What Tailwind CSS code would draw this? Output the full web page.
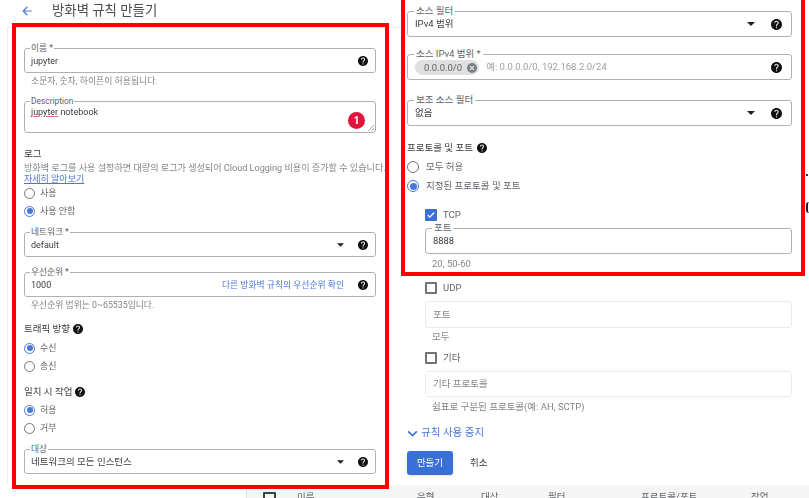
<!DOCTYPE html>
<html lang="ko"><head><meta charset="utf-8">
<script src="https://cdn.jsdelivr.net/npm/@tailwindcss/browser@4"></script>
</head>
<body class="bg-white">
<svg class="hidden"><defs>
<symbol id="help" viewBox="2 2 20 20"><path fill="#111" d="M12 2C6.48 2 2 6.48 2 12s4.48 10 10 10 10-4.48 10-10S17.52 2 12 2zm1 17h-2v-2h2v2zm2.07-7.75l-.9.92C13.45 12.9 13 13.5 13 15h-2v-.5c0-1.1.45-2.1 1.17-2.83l1.24-1.26c.37-.36.59-.86.59-1.41 0-1.1-.9-2-2-2s-2 .9-2 2H8c0-2.21 1.79-4 4-4s4 1.79 4 4c0 .88-.36 1.68-.93 2.25z"/></symbol>
<symbol id="caret" viewBox="0 0 8 4"><path fill="#202124" d="M0 0h8L4 4z"/></symbol>
</defs></svg>
<div class="relative w-[809px] h-[498px] overflow-hidden flex blur-[0.4px] text-[9.5px] leading-[12px] text-[#3c4043] font-['Roboto','Noto_Sans_CJK_KR',sans-serif]">

<!-- left column -->
<div class="w-[400px] shrink-0 flex flex-col">
  <div class="ml-[7px] h-[28px] border-b border-[#e8eaed] flex items-start pt-[1px]">
    <svg class="ml-[13px] mt-[3px] w-[14px] h-[14px]" viewBox="0 0 24 24"><path fill="#4a78d8" d="M20 11H7.83l5.59-5.59L12 4l-8 8 8 8 1.41-1.41L7.83 13H20v-2z"/></svg>
    <span class="ml-[18px] text-[13.4px] leading-[19px] text-[#4a4d51]">방화벽 규칙 만들기</span>
  </div>
  <div class="ml-[24px] w-[352px] flex flex-col">
    <div class="relative mt-[20px] h-[25px] border border-[#aeb1b5] rounded-[3px] flex items-center justify-between pl-[6px] pr-[7px]">
      <span class="absolute left-[5px] top-[-7px] bg-white px-[1px] text-[8.7px] text-[#5f6368]">이름 *</span>
      <span class="text-[9px]">jupyter</span>
      <svg class="w-[10px] h-[10px]"><use href="#help"/></svg>
    </div>
    <p class="mt-[2px] pl-[7px] text-[8.9px] text-[#80868b]">소문자, 숫자, 하이픈이 허용됩니다.</p>
    <div class="relative mt-[14px] h-[32px] border border-[#aeb1b5] rounded-[3px] pl-[6px] pt-[4px]">
      <span class="absolute left-[5px] top-[-7px] bg-white px-[1px] text-[8.4px] text-[#5f6368]">Description</span>
      <span class="text-[9px]"><span class="underline decoration-[#e8688a] underline-offset-1">jupyter</span> notebook</span>
      <span class="absolute left-[323px] top-[10px] w-[17px] h-[17px] rounded-full bg-[#e0143c] text-white text-[10px] font-bold leading-[17px] text-center">1</span>
      <svg class="absolute right-[1px] bottom-[1px] w-[6px] h-[6px]" viewBox="0 0 6 6"><path stroke="#80868b" stroke-width=".7" d="M6 0L0 6M6 3L3 6"/></svg>
    </div>
    <p class="mt-[15px] text-[#3c4043]">로그</p>
    <p class="mt-[2px] text-[9.1px] text-[#80868b] whitespace-nowrap">방화벽 로그를 사용 설정하면 대량의 로그가 생성되어 Cloud Logging 비용이 증가할 수 있습니다.</p>
    <a class="text-[9px] leading-[10px] text-[#4a78d8] underline">자세히 알아보기</a>
    <div class="h-[18px] flex items-center gap-[5px]"><span class="w-[11px] h-[11px] rounded-full border border-[#70757a]"></span><span class="text-[9px] text-[#5f6368]">사용</span></div>
    <div class="h-[18px] flex items-center gap-[5px]"><span class="w-[11px] h-[11px] rounded-full border border-[#4a78d8] flex items-center justify-center"><span class="w-[6px] h-[6px] rounded-full bg-[#4a78d8]"></span></span><span class="text-[9px] text-[#5f6368]">사용 안함</span></div>
    <div class="relative mt-[12px] h-[25px] border border-[#aeb1b5] rounded-[3px] flex items-center pl-[6px] pr-[7px]">
      <span class="absolute left-[5px] top-[-7px] bg-white px-[1px] text-[8.7px] text-[#5f6368]">네트워크 *</span>
      <span class="flex-1 text-[9px]">default</span>
      <svg class="w-[7px] h-[4px] mr-[14px]"><use href="#caret"/></svg>
      <svg class="w-[10px] h-[10px]"><use href="#help"/></svg>
    </div>
    <div class="relative mt-[15px] h-[25px] border border-[#aeb1b5] rounded-[3px] flex items-center pl-[6px] pr-[7px]">
      <span class="absolute left-[5px] top-[-7px] bg-white px-[1px] text-[8.7px] text-[#5f6368]">우선순위 *</span>
      <span class="flex-1 text-[9px]">1000</span>
      <a class="text-[8.8px] text-[#4a78d8] mr-[14px]">다른 방화벽 규칙의 우선순위 확인</a>
      <svg class="w-[10px] h-[10px]"><use href="#help"/></svg>
    </div>
    <p class="mt-[2px] pl-[7px] text-[8.8px] text-[#80868b]">우선순위 범위는 0~65535입니다.</p>
    <p class="mt-[12px] flex items-center gap-[3px]">트래픽 방향 <svg class="w-[10px] h-[10px]"><use href="#help"/></svg></p>
    <div class="mt-[4px] h-[18px] flex items-center gap-[5px]"><span class="w-[11px] h-[11px] rounded-full border border-[#4a78d8] flex items-center justify-center"><span class="w-[6px] h-[6px] rounded-full bg-[#4a78d8]"></span></span><span class="text-[9px] text-[#5f6368]">수신</span></div>
    <div class="h-[18px] flex items-center gap-[5px]"><span class="w-[11px] h-[11px] rounded-full border border-[#70757a]"></span><span class="text-[9px] text-[#5f6368]">송신</span></div>
    <p class="mt-[11px] flex items-center gap-[3px]">일치 시 작업 <svg class="w-[10px] h-[10px]"><use href="#help"/></svg></p>
    <div class="mt-[3px] h-[18px] flex items-center gap-[5px]"><span class="w-[11px] h-[11px] rounded-full border border-[#4a78d8] flex items-center justify-center"><span class="w-[6px] h-[6px] rounded-full bg-[#4a78d8]"></span></span><span class="text-[9px] text-[#5f6368]">허용</span></div>
    <div class="h-[18px] flex items-center gap-[5px]"><span class="w-[11px] h-[11px] rounded-full border border-[#70757a]"></span><span class="text-[9px] text-[#5f6368]">거부</span></div>
    <div class="relative mt-[12px] h-[25px] border border-[#aeb1b5] rounded-[3px] flex items-center pl-[6px] pr-[7px]">
      <span class="absolute left-[5px] top-[-7px] bg-white px-[1px] text-[8.7px] text-[#5f6368]">대상</span>
      <span class="flex-1">네트워크의 모든 인스턴스</span>
      <svg class="w-[7px] h-[4px] mr-[14px]"><use href="#caret"/></svg>
      <svg class="w-[10px] h-[10px]"><use href="#help"/></svg>
    </div>
  </div>
</div>

<!-- right column -->
<div class="ml-[7px] w-[385px] shrink-0 flex flex-col">
  <div class="relative mt-[11px] h-[26px] border border-[#aeb1b5] rounded-[3px] flex items-center pl-[7px] pr-[9px]">
    <span class="absolute left-[6px] top-[-7px] bg-white px-[2px] text-[#5f6368]">소스 필터</span>
    <span class="flex-1">IPv4 범위</span>
    <svg class="w-[8px] h-[4px] mr-[16px]"><use href="#caret"/></svg>
    <svg class="w-[11px] h-[11px]"><use href="#help"/></svg>
  </div>
  <div class="relative mt-[17px] h-[26px] border border-[#aeb1b5] rounded-[3px] flex items-center pl-[7px] pr-[9px]">
    <span class="absolute left-[6px] top-[-7px] bg-white px-[2px] text-[#5f6368]">소스 IPv4 범위 *</span>
    <span class="h-[15px] rounded-full bg-[#e0e0e0] flex items-center pl-[9px] pr-[2px] gap-[5px] text-[#5f6368] mt-[1px]">0.0.0.0/0
      <svg class="w-[10px] h-[10px]" viewBox="0 0 10 10"><circle cx="5" cy="5" r="5" fill="#7b7f84"/><path stroke="#e0e0e0" stroke-width="1.2" d="M3 3l4 4M7 3L3 7"/></svg>
    </span>
    <span class="flex-1 ml-[7px] text-[#9aa0a6]">예: 0.0.0.0/0, 192.168.2.0/24</span>
    <svg class="w-[11px] h-[11px]"><use href="#help"/></svg>
  </div>
  <div class="relative mt-[20px] h-[26px] border border-[#aeb1b5] rounded-[3px] flex items-center pl-[7px] pr-[9px]">
    <span class="absolute left-[6px] top-[-7px] bg-white px-[2px] text-[#5f6368]">보조 소스 필터</span>
    <span class="flex-1">없음</span>
    <svg class="w-[8px] h-[4px] mr-[16px]"><use href="#caret"/></svg>
    <svg class="w-[11px] h-[11px]"><use href="#help"/></svg>
  </div>
  <p class="mt-[16px] flex items-center gap-[4px]">프로토콜 및 포트 <svg class="w-[10px] h-[10px]"><use href="#help"/></svg></p>
  <div class="mt-[4px] h-[18px] flex items-center gap-[7px]"><span class="w-[12px] h-[12px] rounded-full border border-[#70757a]"></span><span class="text-[#5f6368]">모두 허용</span></div>
  <div class="mt-[1px] h-[18px] flex items-center gap-[7px]"><span class="w-[12px] h-[12px] rounded-full border border-[#4a78d8] flex items-center justify-center"><span class="w-[7px] h-[7px] rounded-full bg-[#4a78d8]"></span></span><span class="text-[#5f6368]">지정된 프로토콜 및 포트</span></div>
  <div class="pl-[18px] flex flex-col">
    <div class="mt-[14px] h-[12px] flex items-center gap-[6px]">
      <span class="w-[12px] h-[12px] rounded-[1px] bg-[#3b6fd8] flex items-center justify-center"><svg class="w-[10px] h-[10px]" viewBox="0 0 24 24"><path fill="none" stroke="#fff" stroke-width="3" d="M4 12l5 5L20 6"/></svg></span>
      <span class="text-[#5f6368]">TCP</span>
    </div>
    <div class="relative mt-[7px] h-[26px] border border-[#aeb1b5] rounded-[3px] flex items-center pl-[7px]">
      <span class="absolute left-[6px] top-[-7px] bg-white px-[2px] text-[#5f6368]">포트</span>
      <span class="text-[9.3px]">8888</span>
    </div>
    <p class="mt-[4px] pl-[7px] text-[#80868b]">20, 50-60</p>
    <div class="mt-[12px] h-[12px] flex items-center gap-[6px]">
      <span class="w-[12px] h-[12px] rounded-[1px] border-2 border-[#70757a]"></span>
      <span class="text-[#5f6368]">UDP</span>
    </div>
    <div class="mt-[7px] h-[27px] border border-[#e8eaed] rounded-[3px] flex items-center pl-[7px] text-[#80868b]">포트</div>
    <p class="mt-[3px] pl-[7px] text-[#80868b]">모두</p>
    <div class="mt-[9px] h-[12px] flex items-center gap-[6px]">
      <span class="w-[12px] h-[12px] rounded-[1px] border-2 border-[#70757a]"></span>
      <span class="text-[#5f6368]">기타</span>
    </div>
    <div class="mt-[7px] h-[26px] border border-[#e8eaed] rounded-[3px] flex items-center pl-[7px] text-[#80868b]">기타 프로토콜</div>
    <p class="mt-[4px] pl-[7px] text-[#80868b]">쉼표로 구분된 프로토콜(예: AH, SCTP)</p>
  </div>
  <div class="-ml-[1px] mt-[14px] h-[12px] flex items-center gap-[2px] text-[10.5px] text-[#4a78d8]">
    <svg class="w-[13px] h-[13px]" viewBox="0 0 24 24"><path fill="none" stroke="#3b6fd8" stroke-width="3" d="M4 8l8 8 8-8"/></svg>규칙 사용 중지
  </div>
  <div class="mt-[12px] flex items-center">
    <button class="w-[46px] h-[24px] rounded-[3px] bg-[#3b6fd8] text-white shadow-sm">만들기</button>
    <span class="ml-[17px]">취소</span>
  </div>
</div>

<!-- table header peeking in under the form -->
<div class="absolute left-[246px] right-0 top-[485px] h-[13px] bg-[#f5f5f5] border-l border-[#e0e0e0] text-[#5f6368]">
  <span class="absolute left-[16px] top-[7px] w-[13px] h-[13px] border-2 border-[#3c4043] rounded-[1px]"></span>
  <span class="absolute left-[50px] top-[6px]">이름</span>
  <span class="absolute left-[170px] top-[6px]">유형</span>
  <span class="absolute left-[234px] top-[6px]">대상</span>
  <span class="absolute left-[301px] top-[6px]">필터</span>
  <span class="absolute left-[394px] top-[6px] whitespace-nowrap">프로토콜/포트</span>
  <span class="absolute left-[504px] top-[6px]">작업</span>
</div>

<!-- annotation frames -->
<div class="absolute left-[12px] top-[23px] w-[377px] h-[466px] border-[4px] border-[#ff0000]"></div>
<div class="absolute left-[401px] top-[-6px] w-[404px] h-[282px] border-[4px] border-[#ff0000]"></div>
<span class="absolute left-[7px] top-[28px] w-px h-[456px] bg-[#eeeeee]"></span>
<span class="absolute left-[806px] top-[174px] w-[2px] h-[2px] bg-[#333]"></span>
<span class="absolute left-[806px] top-[202px] w-[3px] h-[11px] rounded-l-full border-l-2 border-[#222]"></span>
</div>
</body></html>
